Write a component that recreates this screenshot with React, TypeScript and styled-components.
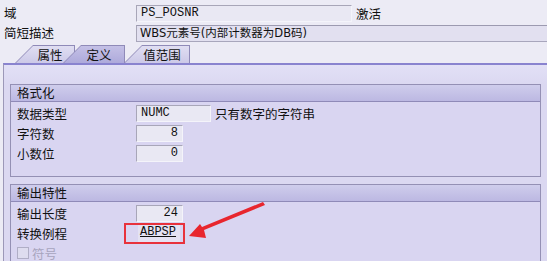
import styled, { createGlobalStyle } from "styled-components";

const GlobalStyle = createGlobalStyle`
  html, body {
    margin: 0;
    padding: 0;
    background: #ecebf5;
    overflow: hidden;
  }
  body {
    font-family: "Noto Sans CJK SC", "DejaVu Sans", sans-serif;
    font-size: 12.5px;
    color: #111;
  }
`;

const Screen = styled.div`
  position: relative;
  width: 547px;
  height: 261px;
  overflow: hidden;
`;

const Header = styled.div`
  display: flex;
  flex-direction: column;
  gap: 2px;
  padding-top: 4px;
`;

const HeaderRow = styled.div`
  display: flex;
  align-items: center;
  height: 18px;
`;

const HeaderLabel = styled.div`
  width: 132px;
  padding-left: 4px;
  line-height: 18px;
`;

const Field = styled.div<{ $width: number; $align?: "left" | "right" }>`
  box-sizing: border-box;
  width: ${({ $width }) => `${$width}px`};
  height: 17px;
  padding: 0 4px;
  background: #e9e8f3;
  border-top: 1px solid #a8a6b8;
  border-left: 1px solid #a8a6b8;
  border-right: 1px solid #f4f4fa;
  border-bottom: 1px solid #f4f4fa;
  font-family: "Liberation Mono", "DejaVu Sans Mono", monospace;
  font-size: 12px;
  line-height: 15px;
  text-align: ${({ $align }) => $align ?? "left"};
  white-space: nowrap;
  overflow: hidden;
`;

const DescField = styled(Field)`
  flex: 1;
  background: #e2e0f0;
  font-family: "DejaVu Sans", "Noto Sans CJK SC", sans-serif;
  font-size: 11.5px;
  padding-left: 3px;
  border-top: 1px solid #9c9ab0;
  border-bottom: 1px solid #a8a6bc;
  border-right: none;
`;

const SideText = styled.span`
  margin-left: 4px;
`;

const TabStrip = styled.div`
  display: flex;
  align-items: flex-end;
  height: 18px;
  margin-top: 3px;
  padding-left: 15px;
`;

const TabOuter = styled.div<{ $active?: boolean; $width: number; $overlap: number }>`
  position: relative;
  width: ${({ $width }) => `${$width}px`};
  height: 18px;
  margin-left: ${({ $overlap }) => `-${$overlap}px`};
  z-index: ${({ $active }) => ($active ? 2 : 1)};
  background: #8f8ab8;
  clip-path: polygon(18px 0, 100% 0, 100% 100%, 0 100%);
`;

const TabInner = styled.div<{ $active?: boolean }>`
  position: absolute;
  inset: 1px 1px 0 1px;
  background: ${({ $active }) =>
    $active
      ? "linear-gradient(#c4c0e6, #aeaadb)"
      : "linear-gradient(#e0def2, #ccc9e8)"};
  clip-path: polygon(17px 0, 100% 0, 100% 100%, 0 100%);
  display: flex;
  align-items: center;
  justify-content: center;
  padding-left: 10px;
  line-height: 16px;
`;

const Panel = styled.div`
  margin-left: 3px;
  border-top: 2px solid #8983cf;
  border-left: 1px solid #9c98b8;
  background: linear-gradient(#e2e0f6 0, #dbd8f1 20px);
  padding: 19px 6px 0 6px;
  display: flex;
  flex-direction: column;
  gap: 7px;
  height: 200px;
`;

const GroupBox = styled.div<{ $height: number }>`
  box-sizing: border-box;
  width: 531px;
  height: ${({ $height }) => `${$height}px`};
  border: 1px solid #9490b4;
  background: #d9d5f1;
`;

const GroupTitle = styled.div`
  height: 16px;
  padding-left: 6px;
  line-height: 16px;
  background: linear-gradient(#cfcdec, #bcb8e2);
  border-bottom: 1px solid #8f8ab8;
`;

const GroupBody = styled.div`
  display: flex;
  flex-direction: column;
  gap: 3px;
  padding: 3px 0 0 6px;
`;

const FieldRow = styled.div`
  display: flex;
  align-items: center;
  height: 17px;
`;

const RowLabel = styled.div`
  width: 119px;
  line-height: 17px;
`;

const Highlight = styled.div`
  position: relative;
  margin-left: -12px;
  padding: 0 0 0 12px;
  border: 2px solid #e8323c;
  width: 61px;
  box-sizing: border-box;
  height: 21px;
  display: flex;
  align-items: center;
`;

const LinkField = styled(Field)`
  border: none;
  background: #e4e2f2;
  text-decoration: underline;
  padding: 0 0 0 2px;
`;

const CheckRow = styled.div`
  display: flex;
  align-items: center;
  gap: 3px;
  color: #a7a4bd;
  height: 14px;
  margin-top: 1px;
`;

const CheckBox = styled.span`
  box-sizing: border-box;
  width: 12px;
  height: 12px;
  border: 1px solid #b0aec6;
  background: #dedcef;
`;

const ArrowOverlay = styled.svg`
  position: absolute;
  left: 0;
  top: 0;
  pointer-events: none;
`;

const formatRows = [
  { label: "数据类型", value: "NUMC", width: 75, align: "left" as const, note: "只有数字的字符串" },
  { label: "字符数", value: "8", width: 47, align: "right" as const },
  { label: "小数位", value: "0", width: 47, align: "right" as const },
];

export default function App() {
  return (
    <Screen>
      <GlobalStyle />
      <Header>
        <HeaderRow>
          <HeaderLabel>域</HeaderLabel>
          <Field $width={216}>PS_POSNR</Field>
          <SideText>激活</SideText>
        </HeaderRow>
        <HeaderRow>
          <HeaderLabel>简短描述</HeaderLabel>
          <DescField $width={411}>WBS元素号(内部计数器为DB码)</DescField>
        </HeaderRow>
      </Header>

      <TabStrip>
        <TabOuter $width={60} $overlap={0}>
          <TabInner>属性</TabInner>
        </TabOuter>
        <TabOuter $width={62} $overlap={12} $active>
          <TabInner $active>定义</TabInner>
        </TabOuter>
        <TabOuter $width={66} $overlap={1}>
          <TabInner>值范围</TabInner>
        </TabOuter>
      </TabStrip>

      <Panel>
        <GroupBox $height={93}>
          <GroupTitle>格式化</GroupTitle>
          <GroupBody>
            {formatRows.map((r) => (
              <FieldRow key={r.label}>
                <RowLabel>{r.label}</RowLabel>
                <Field $width={r.width} $align={r.align}>
                  {r.value}
                </Field>
                {r.note && <SideText>{r.note}</SideText>}
              </FieldRow>
            ))}
          </GroupBody>
        </GroupBox>

        <GroupBox $height={90}>
          <GroupTitle>输出特性</GroupTitle>
          <GroupBody>
            <FieldRow>
              <RowLabel>输出长度</RowLabel>
              <Field $width={47} $align="right">
                24
              </Field>
            </FieldRow>
            <FieldRow>
              <RowLabel>转换例程</RowLabel>
              <Highlight>
                <LinkField $width={42}>ABPSP</LinkField>
              </Highlight>
            </FieldRow>
            <CheckRow>
              <CheckBox />
              符号
            </CheckRow>
          </GroupBody>
        </GroupBox>
      </Panel>

      <ArrowOverlay width={547} height={261} viewBox="0 0 547 261">
        <polygon
          points="263,202 265,205 204,230 206,238 189,236 200,224 202,227"
          fill="#e8262e"
        />
      </ArrowOverlay>
    </Screen>
  );
}
